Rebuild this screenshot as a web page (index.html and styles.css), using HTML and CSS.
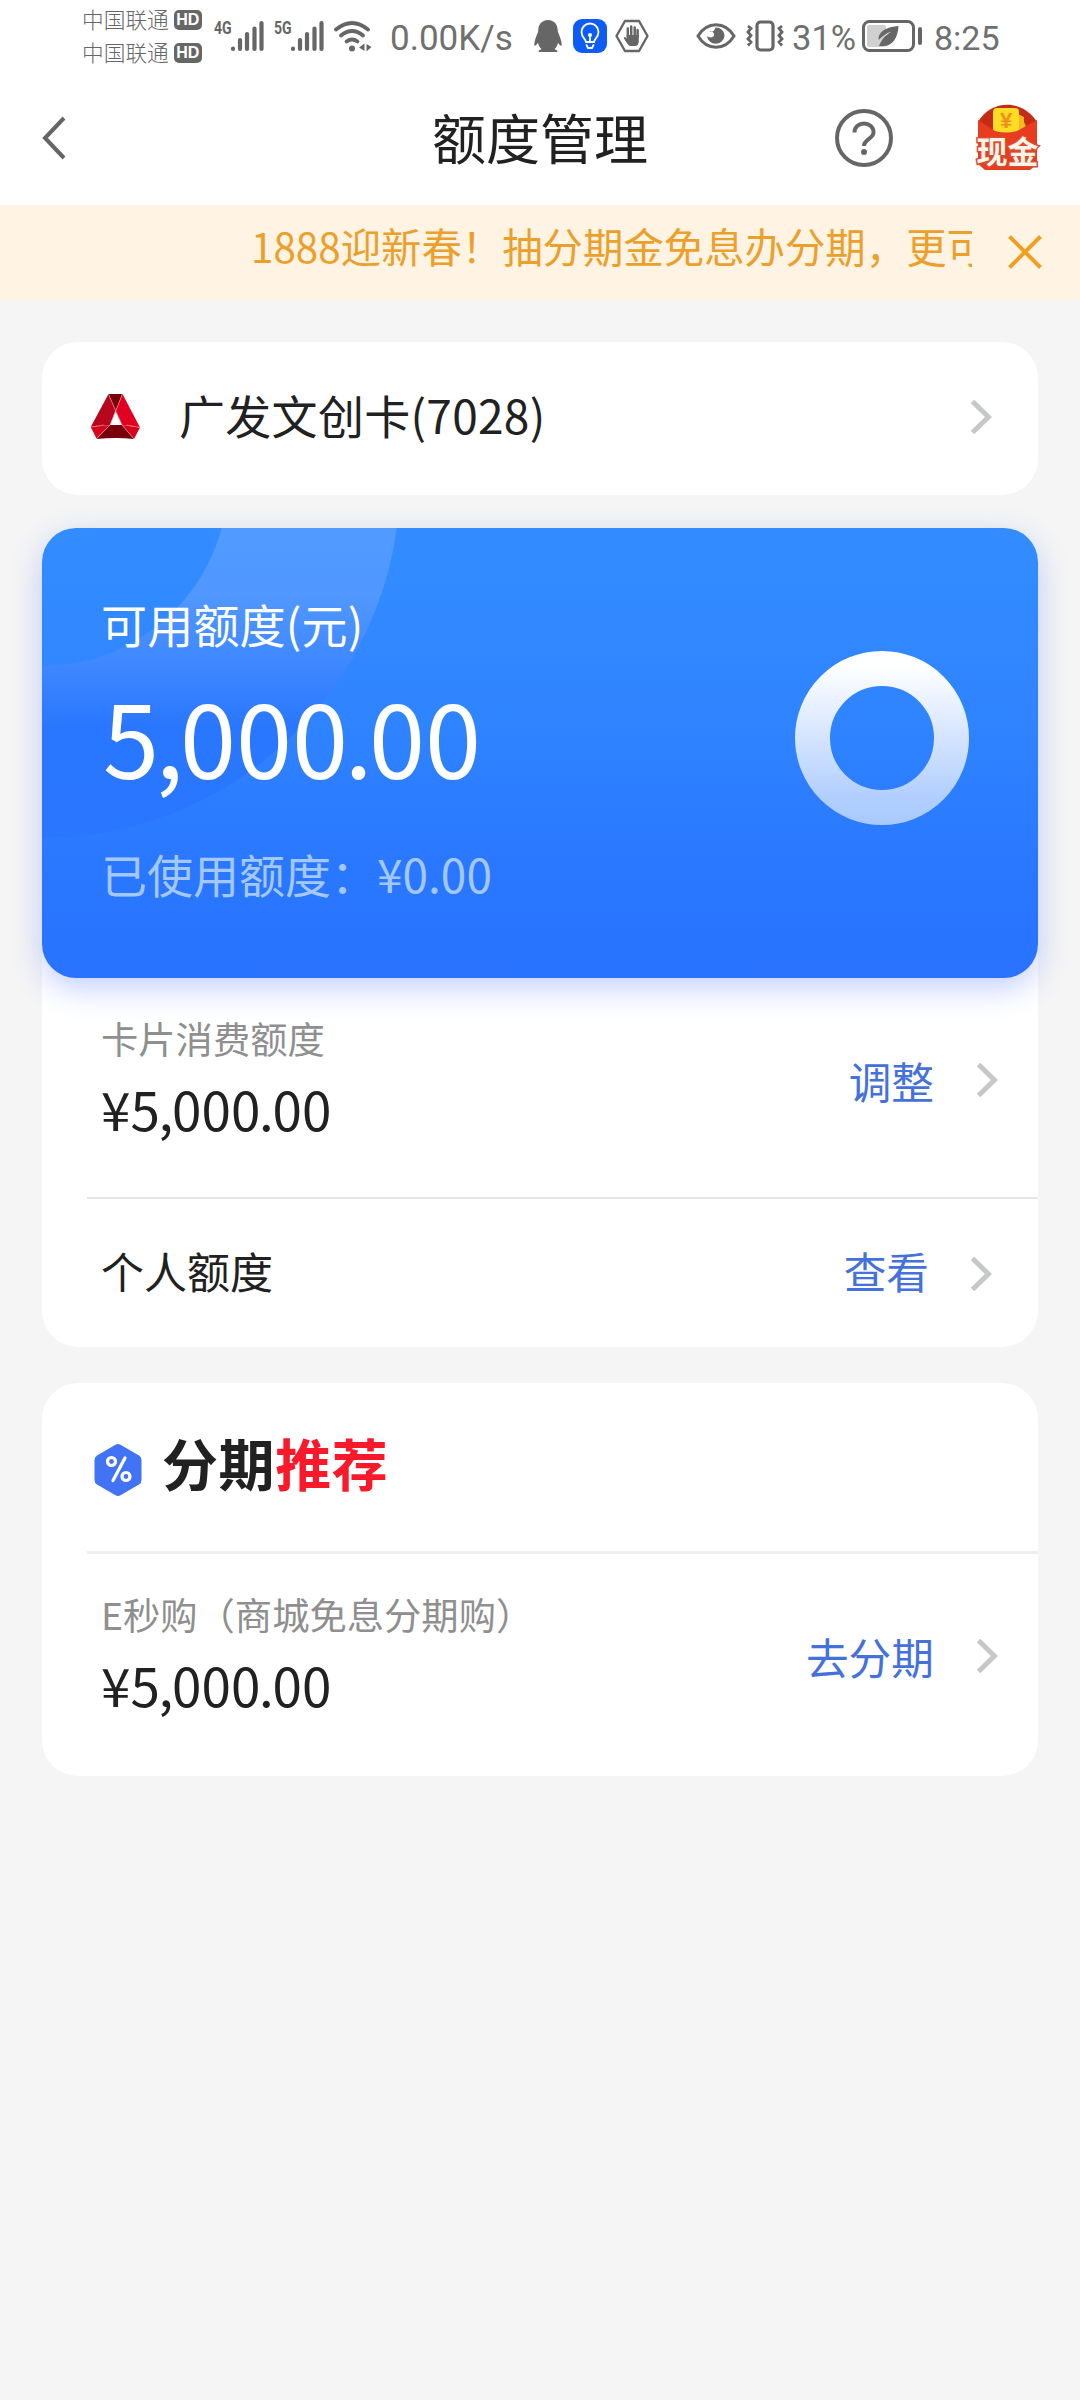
FILE: index.html
```html
<!DOCTYPE html>
<html lang="zh-CN">
<head>
<meta charset="utf-8">
<title>额度管理</title>
<link rel="stylesheet" href="styles.css">
</head>
<body>
<svg class="defs" width="0" height="0" aria-hidden="true">
  <symbol id="signal" viewBox="0 0 34 32"><path d="M3 28.500V29M10 20v9M17 14v15M24.500 8.500V29M31.500 3v26" fill="none" stroke="#666" stroke-width="4.200" stroke-linecap="round"/></symbol>
  <symbol id="chevron" viewBox="0 0 22 34"><path d="M2.500 1.500 18.500 17 2.500 32.500" fill="none" stroke="#c6c7c9" stroke-width="5"/></symbol>
</svg>

<div class="status">
  <div class="carriers">
    <div class="carrier"><span>中国联通</span><b class="hd">HD</b></div>
    <div class="carrier"><span>中国联通</span><b class="hd">HD</b></div>
  </div>
  <span class="net net-4g">4G</span>
  <svg class="signal" width="34" height="32"><use href="#signal"/></svg>
  <span class="net net-5g">5G</span>
  <svg class="signal" width="34" height="32"><use href="#signal"/></svg>
  <svg class="wifi" width="38" height="32" viewBox="0 0 38 32">
    <g fill="none" stroke="#666" stroke-width="3.800" stroke-linecap="round">
      <path d="M2 8.500Q18 -4.500 34 8.500"/><path d="M7 14.500Q18 5.500 29 14.500"/><path d="M12.500 20.500Q18 16.500 23.500 20.500"/>
    </g>
    <circle cx="18" cy="27.500" r="3" fill="#666"/>
    <path d="M30.500 22.500v7.500l-5.500-3.500zM32.500 23v7.500l5-4.500z" fill="#666"/>
  </svg>
  <span class="speed">0.00K/s</span>
  <svg class="penguin" width="28" height="34" viewBox="0 0 28 34">
    <path d="M14 1C7.500 1 4 6 4.200 12.500 2.500 17 0 22 .3 26.500c.8 1 2.700-1.500 3.700-2.800.5 3 2 5 3.500 6.500-2 .5-3.200 1.500-3 2.800h19c.2-1.300-1-2.300-3-2.800 1.500-1.500 3-3.500 3.500-6.500 1 1.300 2.900 3.800 3.700 2.800.3-4.500-2.200-9.500-3.900-14C24 6 20.500 1 14 1z" fill="#666"/>
  </svg>
  <svg class="bulb" width="34" height="34" viewBox="0 0 34 34">
    <rect width="34" height="34" rx="9" fill="#0d5cf5"/>
    <g fill="none" stroke="#fff" stroke-width="1.800" stroke-linecap="round"><path d="M13 23c0-3-4.500-4.500-4.500-10a8.500 8.500 0 0 1 17 0c0 5.500-4.500 7-4.500 10zM17 17v5M13.500 26l1.500 3h4l1.500-3"/></g>
    <circle cx="17" cy="16" r="2" fill="#fff"/>
  </svg>
  <svg class="stop" width="34" height="34" viewBox="0 0 34 34">
    <path d="M10 2h14l8.500 15L24 32H10L1.500 17z" fill="none" stroke="#666" stroke-width="2.400" stroke-linejoin="round"/>
    <path d="M12.800 19V9.500M16.200 18V7.500M19.700 18V8.500M22.600 18v-7" stroke="#666" stroke-width="2.500" stroke-linecap="round"/>
    <path d="M11.500 16h12.300v6c0 3-1.500 5-3.500 5h-5.500c-2.500-1.500-4.500-5-6-8 0-2 2-1 3.500 1z" fill="#666"/>
  </svg>
  <svg class="eye" width="40" height="28" viewBox="0 0 40 28">
    <path d="M2 14C11-1 29-1 38 14 29 29 11 29 2 14z" fill="none" stroke="#666" stroke-width="3"/>
    <path d="M13.500 9c2 1.500 5 .5 6-3.500 5-.5 9 3.500 9 8.500a8.800 8.800 0 0 1-17.500 0c2 2 6 2 7-.5.700-2-1.500-4.500-4.500-4.500z" fill="#666"/>
  </svg>
  <svg class="vibrate" width="38" height="32" viewBox="0 0 38 32">
    <rect x="11" y="2" width="16" height="28" rx="3.500" fill="none" stroke="#666" stroke-width="3.200"/>
    <path d="M2 6l3 2.500L2 12l3 3.500L2 19l3 3-3 3.500M36 6l-3 2.500 3 3.500-3 3.500 3 3.500-3 3 3 3.500" fill="none" stroke="#666" stroke-width="2.800"/>
  </svg>
  <span class="percent">31%</span>
  <svg class="battery" width="60" height="32" viewBox="0 0 60 32">
    <rect x="5" y="5" width="19" height="22" rx="2" fill="#d0d0d0"/>
    <rect x="1.500" y="1.500" width="50" height="29" rx="6" fill="none" stroke="#666" stroke-width="3"/>
    <path d="M58 9v14" stroke="#666" stroke-width="4" stroke-linecap="round"/>
    <path d="M36.500 6C25 7 16 11 16.500 20c4-4 8-7 13-8.500C23 15 19.500 20 17 26h4c9 .5 15-8 15.500-20z" fill="#666"/>
  </svg>
  <span class="clock">8:25</span>
</div>

<header class="header">
  <svg class="back" width="26" height="44" viewBox="0 0 26 44"><path d="M23 2 4 22l19 20" fill="none" stroke="#666" stroke-width="4"/></svg>
  <h1 class="title">额度管理</h1>
  <svg class="help" width="60" height="60" viewBox="0 0 60 60">
    <circle cx="30" cy="30" r="27" fill="none" stroke="#666" stroke-width="4"/>
    <path d="M20.500 24.500c0-12 19-12 19 0 0 6-9.500 7-9.500 13.500" fill="none" stroke="#666" stroke-width="4"/>
    <circle cx="30" cy="44" r="3" fill="#666"/>
  </svg>
  <svg class="cash" width="66" height="68" viewBox="0 0 66 68">
    <path d="M3 18C16-5 48-5 62 18v20H3z" fill="#c52c18"/>
    <path d="M43 10l6 3v5l2 4-8 9z" fill="#f8b91c"/>
    <rect x="18" y="4" width="26" height="25" rx="4" fill="#fddc25"/>
    <text class="cash-yen" x="31" y="24" text-anchor="middle">¥</text>
    <path d="M3 16l17 11q11 3 22 0l20-11v44l-7 6H10l-7-6z" fill="#e93c1f"/>
    <text class="cash-label" x="32.500" y="59" text-anchor="middle">现金</text>
  </svg>
</header>

<div class="notice">
  <div class="notice-view"><span class="notice-text">1888迎新春！抽分期金免息办分期，更可</span></div>
  <svg class="close" width="34" height="34" viewBox="0 0 34 34"><path d="M1.500 1.500l31 31M32.500 1.500l-31 31" stroke="#f0a020" stroke-width="4"/></svg>
</div>

<main class="content">
  <section class="card account">
    <svg class="bank" width="52" height="46" viewBox="0 0 52 46">
      <path d="M18.500 0 .7 33 20 31l5.500-14z" fill="#b8071c"/>
      <path d="M32.500 0 25.500 17 32 31l18 2.500Z" fill="#e1001f"/>
      <path d="M18.500 0h14l-7 17z" fill="#78000a"/>
      <path d="M.7 33 20 31 6.500 44.500zM50 33.500 32 31l12 14z" fill="#d8041f"/>
      <path d="M20 31h12l12 14q-18-2-37.500 0z" fill="#78000a"/>
      <path d="M18.500 0 32 31l12 14M32.500 0 20 31 6.500 44.500M.7 33l13-2M50 33.500l-13-2.500" fill="none" stroke="#f2a4a4" stroke-width=".6"/>
    </svg>
    <span class="account-name">广发文创卡(7028)</span>
    <svg class="chevron" width="22" height="34"><use href="#chevron"/></svg>
  </section>

  <section class="card quota">
    <div class="hero">
      <svg class="hero-arc" width="400" height="340" viewBox="0 0 400 340">
        <defs><linearGradient id="arc" gradientUnits="userSpaceOnUse" x1="0" y1="0" x2="0" y2="310">
          <stop offset="0" stop-color="#519bff"/><stop offset=".22" stop-color="#5097ff"/><stop offset=".42" stop-color="#4089ff"/><stop offset=".64" stop-color="#2a77ff"/><stop offset="1" stop-color="#2a76ff"/>
        </linearGradient></defs>
        <circle cx="0" cy="-48" r="272" fill="none" stroke="url(#arc)" stroke-width="172"/>
      </svg>
      <div class="hero-text">
        <div class="hero-label">可用额度(元)</div>
        <div class="hero-amount">5<span class="sep">,</span>000<span class="sep">.</span>00</div>
        <div class="hero-used">已使用额度：¥0.00</div>
      </div>
      <svg class="ring" width="174" height="174" viewBox="0 0 174 174">
        <defs><linearGradient id="ring" gradientUnits="userSpaceOnUse" x1="0" y1="0" x2="0" y2="174">
          <stop offset=".08" stop-color="#fff"/><stop offset=".85" stop-color="#b1ceff"/><stop offset="1" stop-color="#a9caff"/>
        </linearGradient></defs>
        <circle cx="87" cy="87" r="69.500" fill="none" stroke="url(#ring)" stroke-width="35"/>
      </svg>
    </div>
    <div class="row row-quota">
      <div><div class="label">卡片消费额度</div><div class="amount">¥5<span class="sep">,</span>000<span class="sep">.</span>00</div></div>
      <div class="action"><span>调整</span><svg class="chevron" width="22" height="34"><use href="#chevron"/></svg></div>
    </div>
    <div class="row-personal">
      <span class="personal">个人额度</span>
      <div class="action"><span>查看</span><svg class="chevron" width="22" height="34"><use href="#chevron"/></svg></div>
    </div>
  </section>

  <section class="card plans">
    <div class="plans-head">
      <svg class="hex" width="48" height="54" viewBox="0 0 48 54">
        <path d="M21.500 1.700q2.500-1.400 5 0L45 12.500q2.500 1.500 2.500 4.500v20q0 3-2.500 4.500L26.500 52.300q-2.500 1.400-5 0L3 41.500Q.5 40 .5 37V17q0-3 2.500-4.500z" fill="#4273f5"/>
        <g fill="none" stroke="#fff" stroke-width="3.200"><circle cx="17.500" cy="18.500" r="4"/><circle cx="32" cy="33.500" r="4"/><path d="M31 15 19 37.500" stroke-linecap="round"/></g>
      </svg>
      <h2 class="plans-title">分期<em>推荐</em></h2>
    </div>
    <div class="row row-plan">
      <div><div class="label">E秒购（商城免息分期购）</div><div class="amount">¥5<span class="sep">,</span>000<span class="sep">.</span>00</div></div>
      <div class="action"><span>去分期</span><svg class="chevron" width="22" height="34"><use href="#chevron"/></svg></div>
    </div>
  </section>
</main>
</body>
</html>
```
FILE: styles.css
```css
* { box-sizing: border-box; }
body {
  margin: 0;
  width: 1080px;
  height: 2400px;
  overflow: hidden;
  background: #f5f5f5;
  color: #212121;
  font-family: "Noto Sans CJK SC", sans-serif;
  white-space: nowrap;
}
.defs { position: absolute; }
svg { flex: none; display: block; }

/* system status bar */
.status {
  display: flex;
  height: 75px;
  padding-left: 82px;
  background: #fff;
  color: #666;
}
.status > * { flex: none; }
.carriers { width: 121px; padding-top: 3px; }
.carrier { display: flex; align-items: center; height: 33px; font-size: 21.7px; line-height: 31px; font-weight: 300; }
.carrier span { padding-bottom: 2px; }
.hd {
  width: 28px;
  height: 20px;
  margin-left: 5px;
  border-radius: 5px;
  background: #666;
  color: #fff;
  font: 700 16px/20px "Liberation Sans", sans-serif;
  text-align: center;
}
.net { width: 17px; margin-top: 18px; margin-left: 11px; font: 700 19px/20px "Roboto", sans-serif; transform: scaleX(.74); transform-origin: left; }
.net-5g { margin-left: 10px; }
.signal { margin: 20px 0 0 -1px; }
.wifi { margin: 21px 0 0 10px; }
.speed { width: 120px; margin: 19px 0 0 18px; font: 400 35px/40px "Roboto", sans-serif; color: #707070; }
.penguin { margin: 19px 0 0 24px; }
.bulb { margin: 19px 0 0 11px; }
.stop { margin: 19px 0 0 8px; }
.eye { margin: 22px 0 0 47px; }
.vibrate { margin: 20px 0 0 10px; }
.percent { width: 66px; margin: 18px 0 0 8px; font: 400 34.500px/40px "Roboto", sans-serif; color: #707070; }
.battery { margin: 20px 0 0 4px; }
.clock { margin: 18px 0 0 12px; font: 400 34px/40px "Roboto", sans-serif; color: #707070; }

/* page header */
.header {
  display: grid;
  grid-template-columns: 393px 294px 147px 60px auto;
  align-items: center;
  height: 130px;
  padding-bottom: 4px;
  background: #fff;
}
.back { margin-left: 41px; }
.title { margin: 0; font-size: 54px; font-weight: 400; line-height: 60px; text-align: center; padding-bottom: 3px; }
.help { grid-column: 4; }
.cash { margin-left: 81px; }
.cash-yen { font: 700 22px "Liberation Sans", sans-serif; fill: #ef8d1d; }
.cash-label { font: 700 31px "Noto Sans CJK SC", sans-serif; fill: #fff3e4; stroke: #d94a32; stroke-width: 3px; paint-order: stroke; }

/* scrolling notice */
.notice { display: flex; align-items: center; height: 95px; background: #fff3e3; color: #eba02c; }
.notice-view { width: 972px; padding-left: 251px; overflow: hidden; }
.notice-text { display: block; width: 721px; overflow: hidden; font-size: 40.400px; line-height: 60px; margin-bottom: 14px; }
.close { margin-left: 36px; margin-bottom: 2px; }

/* cards */
.content { padding: 42px 42px 0; }
.card { border-radius: 36px; background: #fff; }
.account { display: flex; align-items: center; height: 153px; padding: 0 46px 4px 48px; }
.account-name { flex: 1; margin-left: 37px; font-size: 46px; line-height: 60px; letter-spacing: .3px; padding-bottom: 5px; }

.quota { height: 819px; margin-top: 33px; }
.hero {
  position: relative;
  display: flex;
  height: 450px;
  border-radius: 34px;
  background: linear-gradient(#338dff, #2f84ff 42%, #2a78ff 74%, #2872ff);
  box-shadow: 0 10px 30px rgba(60, 100, 255, .3);
  color: #fff;
}
.hero-arc { position: absolute; left: 0; top: 0; border-top-left-radius: 34px; overflow: hidden; }
.hero-text { position: relative; flex: 1; padding: 65px 0 0 59px; }
.hero-label { font-size: 46px; line-height: 60px; letter-spacing: .2px; }
.hero-amount { margin: 22px 0 0 2px; font-size: 101px; line-height: 120px; }
.hero-amount .sep { margin: 0 -.036em; }
.hero-used { margin-top: 48px; font-size: 46px; line-height: 60px; color: #a3c7ff; }
.ring { margin: 123px 69px 0 0; }

.row, .row-personal { display: flex; justify-content: space-between; }
.row { padding: 38px 40px 0 59px; }
.row-quota { height: 219px; }
.row-plan { height: 222px; }
.row .action { margin-top: 34px; }
.label { font-size: 37.300px; line-height: 44px; color: #8f8f8f; }
.amount { margin-top: 18px; font-size: 53px; line-height: 60px; }
.amount .sep { margin: 0 -.024em; }
.action { display: flex; align-items: center; height: 60px; gap: 42px; font-size: 42.700px; line-height: 60px; color: #4571dc; }
.action span { padding-bottom: 1px; }
.row-personal {
  align-items: center;
  height: 150px;
  margin-left: 45px;
  padding: 2px 46px 0 14px;
  border-top: 2px solid #e6e6e6;
}
.row-personal .action { gap: 41px; }
.personal { font-size: 43px; line-height: 60px; padding-bottom: 8px; }
.row-personal .action span { padding-bottom: 8px; }

.plans { height: 393px; margin-top: 36px; }
.plans-head { display: flex; align-items: center; height: 171px; margin-left: 45px; padding: 5px 0 0 7px; border-bottom: 3px solid #eee; }
.plans-title { margin: 0 0 0 20px; font-size: 56px; font-weight: 700; line-height: 60px; letter-spacing: .6px; padding-bottom: 16px; }
.plans-title em { font-style: normal; color: #f8192b; }
```
